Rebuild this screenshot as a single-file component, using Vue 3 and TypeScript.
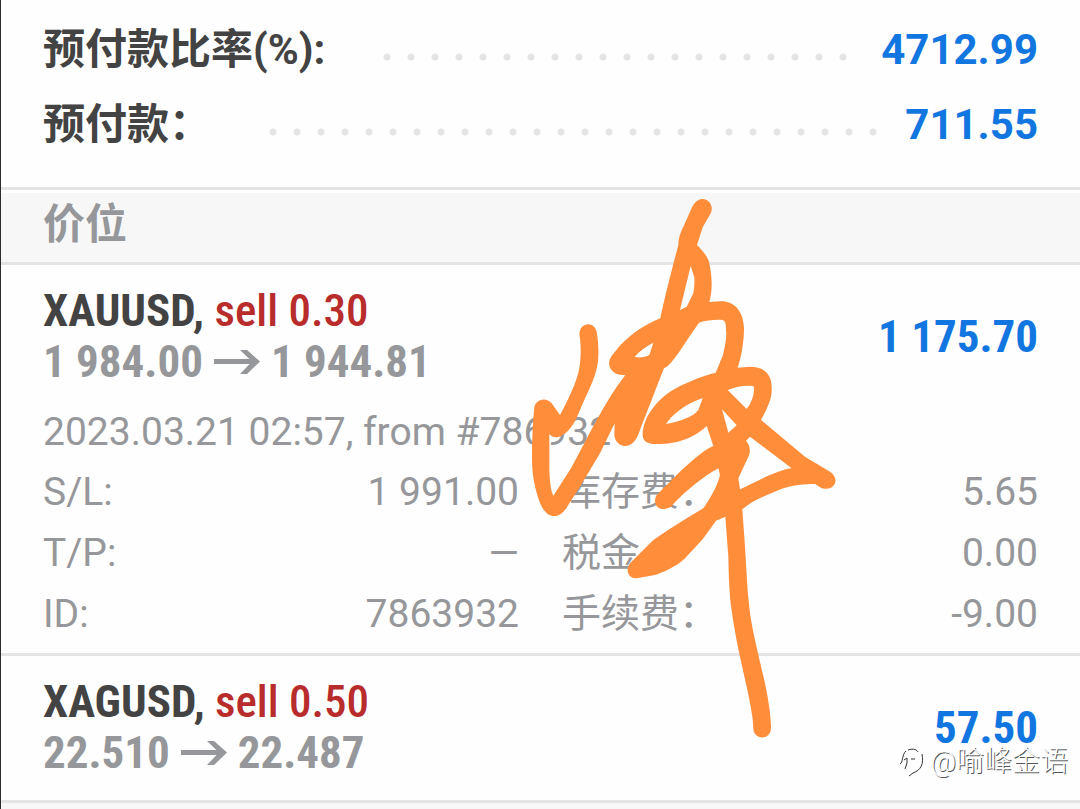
<script setup lang="ts">
interface Field {
  label: string
  value: string
}

interface Position {
  symbol: string
  side: string
  open: string
  current: string
  profit: string
  opened?: string
  fields?: Field[]
}

const totals: Field[] = [
  { label: '预付款比率(%):', value: '4712.99' },
  { label: '预付款：', value: '711.55' },
]

const positions: Position[] = [
  {
    symbol: 'XAUUSD,',
    side: 'sell 0.30',
    open: '1 984.00',
    current: '1 944.81',
    profit: '1 175.70',
    opened: '2023.03.21 02:57, from #786932',
    fields: [
      { label: 'S/L:', value: '1 991.00' },
      { label: '库存费：', value: '5.65' },
      { label: 'T/P:', value: '—' },
      { label: '税金', value: '0.00' },
      { label: 'ID:', value: '7863932' },
      { label: '手续费：', value: '-9.00' },
    ],
  },
  {
    symbol: 'XAGUSD,',
    side: 'sell 0.50',
    open: '22.510',
    current: '22.487',
    profit: '57.50',
  },
]
</script>

<template>
  <main class="screen">
    <section class="totals">
      <div v-for="t in totals" :key="t.label" class="total">
        <span class="total-label">{{ t.label }}</span>
        <span class="leader"></span>
        <span class="total-value">{{ t.value }}</span>
      </div>
    </section>

    <h2 class="heading">价位</h2>

    <article v-for="p in positions" :key="p.symbol" class="position">
      <div class="summary">
        <div>
          <div class="name">{{ p.symbol }} <span class="side">{{ p.side }}</span></div>
          <div class="prices">
            <span>{{ p.open }}</span>
            <svg class="arrow" viewBox="0 0 46 26" aria-hidden="true">
              <path class="shaft" d="M0 12.5H42" />
              <path class="head" d="M26 1H33L46 12.5L33 25H26L38 12.5Z" />
            </svg>
            <span>{{ p.current }}</span>
          </div>
        </div>
        <div class="profit">{{ p.profit }}</div>
      </div>
      <p v-if="p.opened" class="opened">{{ p.opened }}</p>
      <dl v-if="p.fields" class="fields">
        <div v-for="f in p.fields" :key="f.label" class="field">
          <dt>{{ f.label }}</dt>
          <dd>{{ f.value }}</dd>
        </div>
      </dl>
    </article>
    <div class="next"></div>

    <svg class="ink" viewBox="0 0 990 1680" aria-hidden="true">
      <path
        fill-rule="evenodd"
        d="M180 445C168 395 228 388 231 432C236 465 236 490 234 515C226 570 200 610 180 660C165 700 145 730 118 740C105 745 95 740 88 732L88 840C90 880 92 900 100 917L153 835C200 750 250 640 316 555C300 556 285 553 275 540C262 525 265 505 285 485C320 440 370 405 421 385C430 340 455 240 475 165C475 145 480 130 490 110C505 80 515 50 522 42C545 10 585 35 573 68L548 112L531 165C545 180 560 195 567 215C577 260 578 300 568 336L600 334C640 332 670 360 672 415C672 450 665 500 653 533L690 530C735 530 756 555 755 595C757 620 745 650 723 690L855 800L930 845C960 865 945 900 915 896L905 895L885 882C850 882 820 885 790 895C740 915 700 930 667 958L675 1070C680 1150 682 1190 686 1230C690 1300 715 1390 735 1480C745 1530 752 1570 753 1612C754 1652 700 1652 700 1615C700 1590 695 1560 680 1490C660 1400 645 1340 632 1240C628 1200 626 1160 625 1100L616 980L588 992L548 1048L495 1105C480 1120 450 1140 405 1155L350 1165C325 1165 315 1140 330 1120L400 1050C450 1015 500 985 550 955C575 920 595 880 600 855L595 835C550 860 500 900 460 942C455 950 445 957 430 957C412 957 397 940 410 915L485 840C520 810 550 780 580 768L560 708C510 755 450 763 410 762C385 763 368 755 368 735C368 690 400 640 450 605C490 580 540 560 587 548L609 495C612 480 618 460 619 430C617 410 620 395 608 390C590 388 560 390 537 398L515 430L475 490C460 510 445 530 432 535C410 590 380 670 358 725C350 750 335 768 315 768C297 768 284 752 283 735L284 700L240 790L180 890L135 960C122 975 112 979 100 978C75 975 62 950 52 915C42 880 36 850 36 800C36 750 38 700 43 650C50 628 78 620 95 640L120 675C145 630 162 590 170 565C183 530 184 480 180 445Z
          M512 228L523 262C524 285 522 300 520 310L500 350L480 360Z
          M344 500C360 482 380 468 400 458L388 495C375 503 355 504 344 500Z
          M623 600C650 588 680 585 700 588C706 600 698 635 680 657Z
          M548 625C500 640 460 670 438 702C480 695 520 680 535 660Z
          M606 658L650 706L625 728Z
          M690 740L815 835C770 840 700 880 660 898L655 865L685 800C693 785 690 765 678 752Z"
      />
    </svg>

    <div class="watermark">
      <svg class="mark" viewBox="0 0 28 32" aria-hidden="true">
        <path class="mark-light" d="M2 24C6 17 3 7 12 4C20 0 26 6 25 14C25 22 20 25 13 27" />
        <path d="M3 18C6 17 5 8 9 5M11 4C17 2 20 4 21 6M25 8C27 18 24 24 16 27L12 30M7 14L10 12V17L8 23M14 13H18" />
      </svg>
      <span>@喻峰金语</span>
    </div>
  </main>
</template>

<style>
body {
  margin: 0;
  background: #fefefe;
}
</style>

<style scoped>
.screen {
  position: relative;
  display: flex;
  flex-direction: column;
  min-height: 100vh;
  box-sizing: border-box;
  overflow: hidden;
  border-left: 1px solid #2c2c2e;
  background: #fefefe;
  color: #96979a;
  font-family: Roboto, "Noto Sans CJK SC", sans-serif;
}

.totals {
  padding: 12px 42px 25px;
  border-bottom: 3px solid #e4e4e4;
}

.total {
  display: flex;
  align-items: center;
  height: 75px;
  font-size: 42px;
  line-height: 75px;
  font-weight: 700;
}

.total-label {
  color: #434343;
}

.leader {
  flex: 1;
  height: 8px;
  margin: 14px 20px 0 50px;
  background: radial-gradient(circle at center, #e4e4e4 3px, transparent 4px) left / 24px 8px repeat-x;
}

.total-value {
  color: #1276e0;
}

.heading {
  box-sizing: border-box;
  height: 75px;
  margin: 0;
  padding-left: 42px;
  border-top: 3px solid #fefefe;
  border-bottom: 3px solid #e4e4e4;
  background: #f7f7f7;
  font-size: 42px;
  line-height: 64px;
  font-weight: 700;
}

.position {
  padding: 20px 42px 8px;
  border-bottom: 3px solid #e4e4e4;
}

.summary {
  display: flex;
  justify-content: space-between;
  align-items: center;
  padding-bottom: 14px;
  font-family: "Roboto Condensed", Roboto, "Noto Sans CJK SC", sans-serif;
  font-size: 45px;
  line-height: 51px;
  font-weight: 700;
}

.name {
  color: #434343;
}

.side {
  color: #b82c2c;
  font-weight: 500;
}

.prices {
  display: flex;
  align-items: center;
}

.arrow {
  width: 46px;
  height: 26px;
  margin: 0 11px;
}

.shaft {
  stroke: currentColor;
  stroke-width: 5;
}

.head {
  fill: currentColor;
}

.profit {
  color: #1276e0;
}

.opened {
  margin: 1px 0 0;
  font-size: 39px;
  line-height: 60px;
  font-weight: 400;
}

.fields {
  display: grid;
  grid-template-columns: 1fr 1fr;
  column-gap: 43px;
  margin: 0;
  font-size: 39px;
  line-height: 61px;
  font-weight: 400;
}

.field {
  display: flex;
  justify-content: space-between;
  height: 61px;
}

.field dd {
  margin: 0;
}

.next {
  flex: 1;
  min-height: 5px;
  background: #f7f7f7;
}

.ink {
  position: absolute;
  left: 519px;
  top: 190px;
  width: 330px;
  height: 560px;
  fill: #ff8d3a;
}

.watermark {
  position: absolute;
  right: 12px;
  bottom: 27px;
  display: flex;
  align-items: center;
  gap: 5px;
  color: #fff;
  font-size: 28px;
  line-height: 40px;
  font-weight: 300;
  text-shadow: 1px 1px 0 #555;
}

.mark {
  width: 28px;
  height: 32px;
  fill: none;
  stroke: #333;
  stroke-width: 1;
}

.mark-light {
  stroke: #fff;
  stroke-width: 2;
}
</style>
